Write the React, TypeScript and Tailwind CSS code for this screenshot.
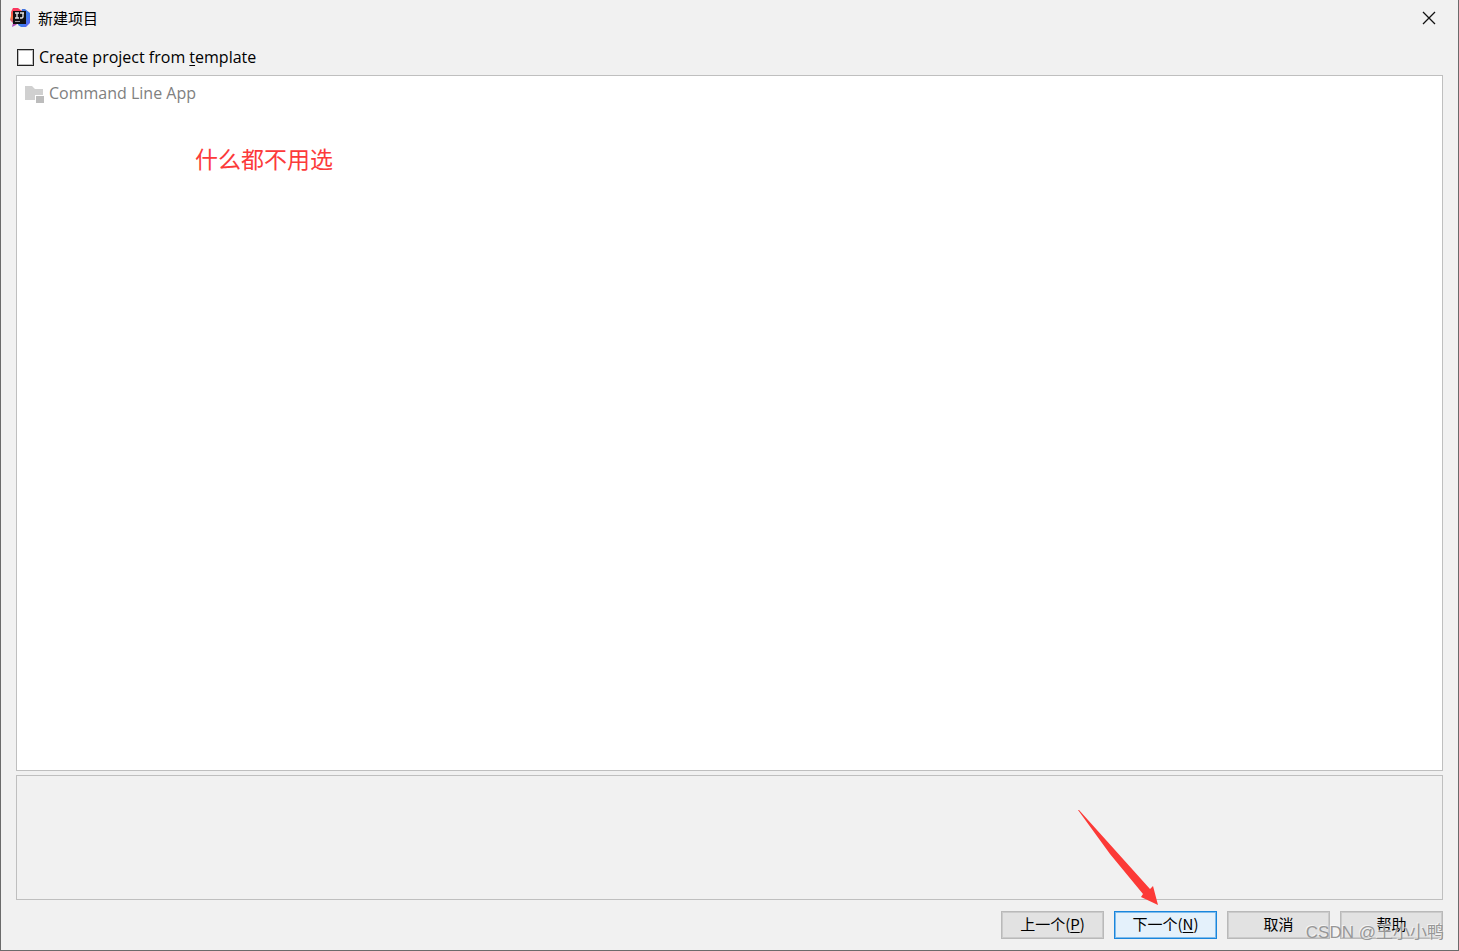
import { useState } from "react";
import type { ReactNode } from "react";

const UI_FONT = "font-['Open_Sans','Noto_Sans_CJK_SC',sans-serif]";
const CJK_FONT = "font-['Noto_Sans_CJK_SC',sans-serif]";

export default function App() {
  const [fromTemplate, setFromTemplate] = useState(false);

  return (
    <div
      className={`relative flex h-screen flex-col border-x border-b border-[#6b6b6b] bg-[#f1f1f1] text-base text-black ${UI_FONT}`}
    >
      <TitleBar />

      <main className="flex flex-1 flex-col px-[15px] pb-[11px]">
        <div className="flex h-[39px] items-center pt-[3px]">
          <label className="flex items-center gap-[5px]">
            <input
              type="checkbox"
              checked={fromTemplate}
              onChange={(e) => setFromTemplate(e.target.checked)}
              className="ml-px size-[17px] appearance-none border border-[#222] bg-white shadow-[inset_0_0_0_1px_#bdbdbd] checked:bg-[#333]"
            />
            <span className="whitespace-nowrap">
              Create project from <Mnemonic>t</Mnemonic>emplate
            </span>
          </label>
        </div>

        {/* Template list */}
        <section className="flex-1 border border-[#bfbfbf] bg-white px-2 pt-[5px]">
          <ul>
            <li className="flex h-6 items-center gap-[5px] text-[#808080]">
              <FolderIcon />
              <span>Command Line App</span>
            </li>
          </ul>
          <p className={`ml-[170px] mt-9 text-[23px] leading-[34px] text-[#fc3a3a] ${CJK_FONT}`}>
            什么都不用选
          </p>
        </section>

        {/* Template description */}
        <section className="mt-1 h-[125px] border border-[#bfbfbf]" />

        <footer className="mt-[11px] flex justify-end gap-[10px]">
          <DialogButton>
            上一个(<Mnemonic>P</Mnemonic>)
          </DialogButton>
          <div className="relative">
            <DialogButton primary>
              下一个(<Mnemonic>N</Mnemonic>)
            </DialogButton>
            <Arrow />
          </div>
          <DialogButton>取消</DialogButton>
          <DialogButton>帮助</DialogButton>
        </footer>
      </main>

      <span className="pointer-events-none absolute bottom-[5px] right-[14px] whitespace-nowrap font-['Liberation_Sans','Noto_Sans_CJK_SC',sans-serif] text-[17px] leading-6 text-[#979797] [text-shadow:-1px_-1px_0_#ffffff99]">
        CSDN @王小小鸭
      </span>
    </div>
  );
}

function TitleBar() {
  return (
    <header className="flex h-9 items-center pl-[9px] pr-[22px]">
      <IdeaLogo />
      <h1 className={`ml-2 text-[15px] leading-5 ${CJK_FONT}`}>新建项目</h1>
      <button type="button" aria-label="关闭" className="ml-auto">
        <svg width="14" height="14" viewBox="0 0 14 14" fill="none" stroke="#111" strokeWidth="1.3">
          <path d="M1 1l12 12M13 1L1 13" />
        </svg>
      </button>
    </header>
  );
}

function Mnemonic({ children }: { children: ReactNode }) {
  return <span className="underline decoration-1 underline-offset-2">{children}</span>;
}

interface DialogButtonProps {
  children: ReactNode;
  primary?: boolean;
}

function DialogButton({ children, primary }: DialogButtonProps) {
  return (
    <button
      type="button"
      className={`block h-7 w-[103px] whitespace-nowrap border pb-[2px] text-[15px] leading-5 ${CJK_FONT} ${
        primary
          ? "border-[#1a86dc] bg-[#e4f1fb] shadow-[inset_0_0_0_1px_#7fbcec]"
          : "border-[#b9b9b9] bg-[#e2e2e2] shadow-[inset_0_0_0_1px_#cbcbcb]"
      }`}
    >
      {children}
    </button>
  );
}

// Points at the "next" button
function Arrow() {
  return (
    <svg
      className="pointer-events-none absolute bottom-[33px] right-[58px]"
      width="81"
      height="96"
      viewBox="0 0 81 96"
      fill="#fc3a37"
    >
      <path d="M0 0L1 0L72 79L75 76L80 95L63 87L65 84L32 44Z" />
    </svg>
  );
}

function FolderIcon() {
  return (
    <svg width="19" height="19" viewBox="0 0 19 19">
      <path d="M0 2h7l3 3h8v6h-8v5H0z" fill="#d0d0d0" />
      <path d="M11 12h8v7h-8z" fill="#bcbcbc" />
    </svg>
  );
}

function IdeaLogo() {
  return (
    <svg width="20" height="20" viewBox="0 0 20 20">
      <defs>
        <linearGradient id="ideaBlue" x1="0" y1="0" x2="1" y2="1">
          <stop offset="0" stopColor="#4a6fd0" />
          <stop offset="0.6" stopColor="#3d7df0" />
          <stop offset="1" stopColor="#6a5cf0" />
        </linearGradient>
        <linearGradient id="ideaRed" x1="0" y1="0" x2="0" y2="1">
          <stop offset="0" stopColor="#fb2f63" />
          <stop offset="0.5" stopColor="#f9753c" />
          <stop offset="1" stopColor="#a03fd8" />
        </linearGradient>
      </defs>
      <path d="M12 1h3l5 4v10l-4 4l-5 0l-3-2z" fill="url(#ideaBlue)" />
      <path d="M3 0h5l4 3v7l-6 7l-4 2l1-4l-3-3l1-4l0-4z" fill="url(#ideaRed)" />
      <path d="M3 3h13v13H3z" fill="#101014" />
      <path d="M5 5h4M5 10h4M7 5v5M10 5h4M13 5v4l-1 1h-2" stroke="#e4e4e4" strokeWidth="1.4" fill="none" />
      <path d="M5 13.500h5" stroke="#9a9a9a" strokeWidth="1" />
    </svg>
  );
}
